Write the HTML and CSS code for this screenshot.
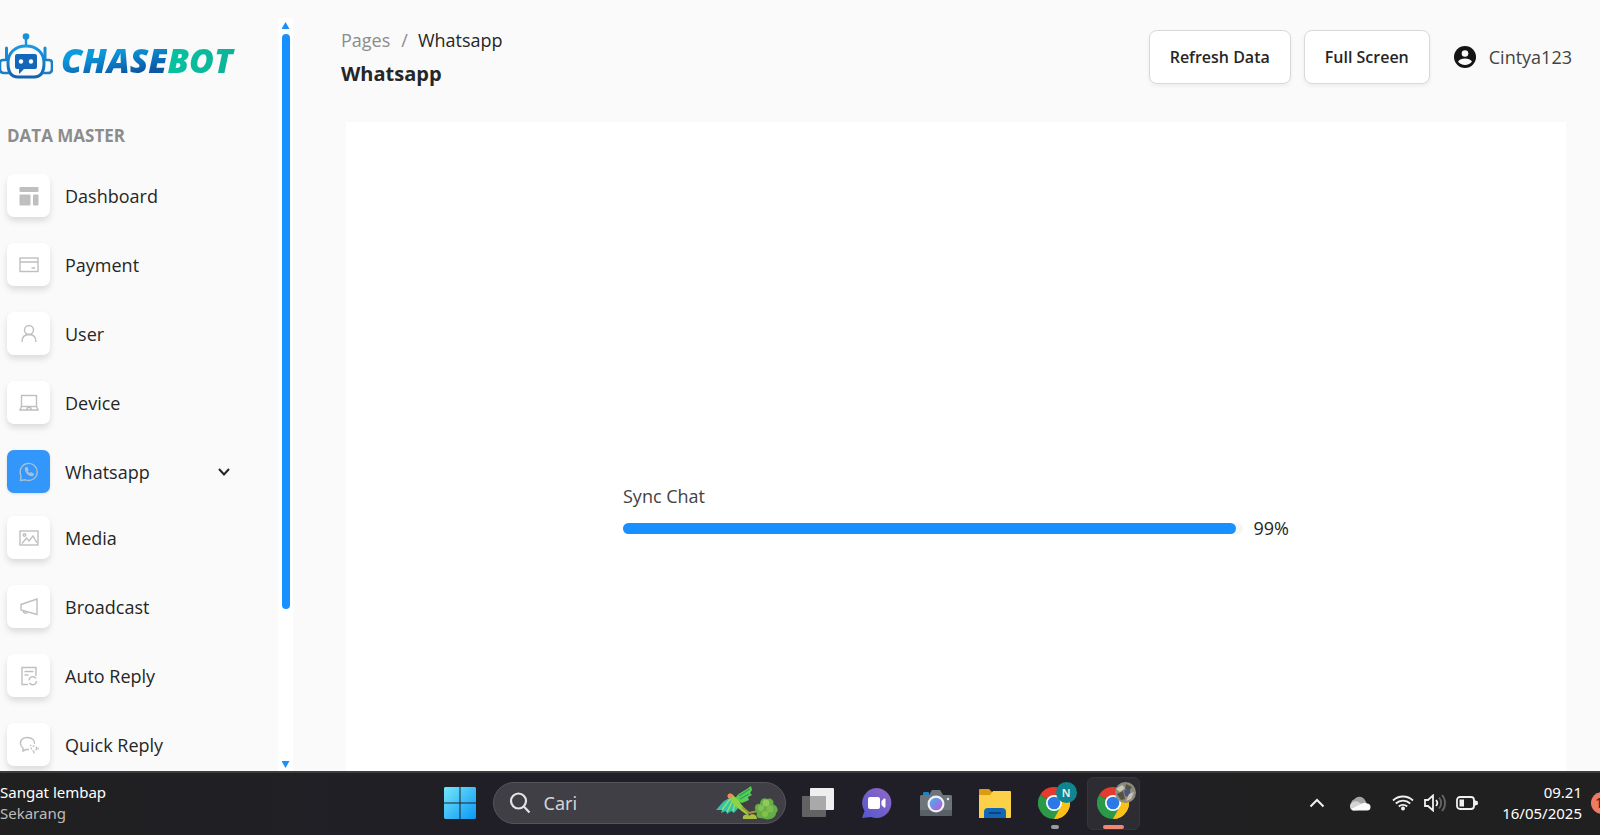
FILE: index.html
```html
<!DOCTYPE html>
<html lang="id">
<head>
    <meta charset="UTF-8">
    <meta name="viewport" content="width=device-width, initial-scale=1.0">
    <title>Whatsapp - Chasebot</title>
    <link rel="stylesheet" href="styles.css">
</head>
<body>

    <div class="app">
        <!-- Sidebar -->
        <aside class="sidebar">
            <div class="sidebar-content">
                <a href="#" class="logo">
                    <svg class="logo-bot" width="53" height="48" viewBox="0 0 53 48" fill="none">
                        <defs>
                            <linearGradient id="bot" x1="0" y1="0" x2="0" y2="1">
                                <stop offset="0" stop-color="#1b9ae0"/>
                                <stop offset="1" stop-color="#1263ae"/>
                            </linearGradient>
                        </defs>
                        <circle cx="26" cy="4.500" r="3.300" fill="#1b8fd8"/>
                        <path d="M26 6V13" stroke="#1b8fd8" stroke-width="2.4"/>
                        <path d="M6.500 16V27M45 16V27" stroke="#1b8ad4" stroke-width="3" stroke-linecap="round"/>
                        <path d="M26 14C15 14 8 21 8 31C8 41 12 45 18 45H34C40 45 44 41 44 31C44 21 37 14 26 14Z" stroke="url(#bot)" stroke-width="3"/>
                        <path d="M7 28H3Q0 28 0 31V37Q0 41 4 41H9M45 28H49Q52 28 52 31V37Q52 41 48 41H43" stroke="#1a7fca" stroke-width="2.600"/>
                        <path d="M17 22H35Q37 22 37 24V35Q37 37 35 37H24L19 42V37H17Q15 37 15 35V24Q15 22 17 22Z" fill="#1467b8"/>
                        <circle cx="21" cy="29.500" r="2.200" fill="#fff"/>
                        <circle cx="31" cy="29.500" r="2.200" fill="#fff"/>
                    </svg>
                    <span class="logo-text"><span class="logo-chase">CHASE</span><span class="logo-green">BOT</span></span>
                </a>

                <h6 class="menu-title">DATA MASTER</h6>

                <nav class="menu">
                    <a href="#" class="menu-item">
                        <span class="icon"><svg width="20" height="20" viewBox="0 0 20 20" fill="#bfbfbf"><rect x="0.500" y="1" width="19" height="5" rx="1"/><rect x="0.500" y="8.500" width="11" height="11" rx="1"/><rect x="14" y="8.500" width="5.500" height="11" rx="1"/></svg></span>
                        Dashboard
                    </a>
                    <a href="#" class="menu-item">
                        <span class="icon"><svg width="20" height="20" viewBox="0 0 20 20"><rect x="1" y="3" width="18" height="13.500"/><path d="M1 7H19M12.500 13H16"/></svg></span>
                        Payment
                    </a>
                    <a href="#" class="menu-item">
                        <span class="icon"><svg width="20" height="20" viewBox="0 0 20 20"><circle cx="10" cy="6" r="4.500"/><path d="M3 18C3 13 6 10.500 10 10.500S17 13 17 18"/></svg></span>
                        User
                    </a>
                    <a href="#" class="menu-item">
                        <span class="icon"><svg width="20" height="20" viewBox="0 0 20 20"><rect x="2.500" y="2.500" width="15" height="11"/><path d="M2.500 13.500L1 17H19L17.500 13.500M7.500 16.500L8.500 14.500H11.500L12.500 16.500"/></svg></span>
                        Device
                    </a>
                    <a href="#" class="menu-item active">
                        <span class="icon"><svg width="20" height="20" viewBox="0 0 20 20"><path d="M1.500 18.500L2 13.500A8.500 8.500 0 1 1 6.500 17.800Z"/><path d="M6.500 6.300C6 10 10 14 13.500 13.500L14.200 12L12 10.800L10.800 12C9.500 11.500 8.300 10.200 8 9L8.900 8L8 5.700Z" fill="#a9bfd6"/></svg></span>
                        Whatsapp
                        <svg class="chevron" width="12" height="8" viewBox="0 0 12 8"><path d="M1 1L6 6.500L11 1"/></svg>
                    </a>
                    <a href="#" class="menu-item">
                        <span class="icon"><svg width="20" height="20" viewBox="0 0 20 20"><rect x="1" y="3" width="18" height="14"/><path d="M3 15.500L7.500 10L10 13L14 8L18 15"/><circle cx="5.500" cy="7" r="1.300"/></svg></span>
                        Media
                    </a>
                    <a href="#" class="menu-item">
                        <span class="icon"><svg width="20" height="20" viewBox="0 0 20 20"><path d="M2 7.500L18 2V17.500L2 13ZM4 13.500C4 16.500 8 17 8.500 14.800"/></svg></span>
                        Broadcast
                    </a>
                    <a href="#" class="menu-item">
                        <span class="icon"><svg width="20" height="20" viewBox="0 0 20 20"><path d="M9 18.500H3V1.500H17V10M5.500 5.500H14.500M5.500 9H9.500"/><path d="M10 14.500A3.800 3.800 0 0 1 17 12.500M17.500 15A3.800 3.800 0 0 1 10.500 17"/></svg></span>
                        Auto Reply
                    </a>
                    <a href="#" class="menu-item">
                        <span class="icon"><svg width="20" height="20" viewBox="0 0 20 20"><path d="M15.500 9C16 5 12.500 2.500 8.500 2.500C4 2.500 1.500 5 1.500 8.500C1.500 10.500 2.500 12 4 13V16L7 14.500H10"/><circle cx="15" cy="13.500" r="2.600" stroke-dasharray="2 1.500"/><path d="M12 11L11 10M18.500 13.500H20M15 17V18.500"/></svg></span>
                        Quick Reply
                    </a>
                </nav>
            </div>

            <!-- Scrollbar -->
            <div class="scrollbar">
                <span class="arrow-up"></span>
                <div class="scroll-track"><div class="scroll-thumb"></div></div>
                <span class="arrow-down"></span>
            </div>
        </aside>

        <!-- Main Content -->
        <main class="main">
            <header class="topbar">
                <div class="heading">
                    <nav class="breadcrumb"><a href="#">Pages</a><span class="slash">/</span><span>Whatsapp</span></nav>
                    <h1>Whatsapp</h1>
                </div>
                <button class="btn">Refresh Data</button>
                <button class="btn">Full Screen</button>
                <a href="#" class="profile">
                    <svg width="22" height="22" viewBox="0 0 22 22"><circle cx="11" cy="11" r="11" fill="#141414"/><circle cx="11" cy="7.500" r="3.300" fill="#fafafa"/><path d="M4 15.500C6.500 11.500 15.500 11.500 18 15.500C15 20 7 20 4 15.500Z" fill="#fafafa"/></svg>
                    <span>Cintya123</span>
                </a>
            </header>

            <section class="card">
                <div class="sync">
                    <label for="sync-chat">Sync Chat</label>
                    <div class="sync-row">
                        <progress id="sync-chat" value="99" max="100"></progress>
                        <span>99%</span>
                    </div>
                </div>
            </section>
        </main>
    </div>

    <!-- Taskbar -->
    <footer class="taskbar">
        <div class="weather">
            <div>Sangat lembap</div>
            <div class="weather-time">Sekarang</div>
        </div>

        <div class="apps">
            <button class="slot" aria-label="Start">
                <svg width="32" height="32" viewBox="0 0 32 32">
                    <defs>
                        <linearGradient id="win" gradientUnits="userSpaceOnUse" x1="0" y1="0" x2="32" y2="32">
                            <stop offset="0" stop-color="#74e6fb"/>
                            <stop offset="1" stop-color="#0a97f5"/>
                        </linearGradient>
                    </defs>
                    <path d="M1 0H15.500V15.500H0V1ZM16.500 0H31L32 1V15.500H16.500ZM0 16.500H15.500V32H1L0 31ZM16.500 16.500H32V31L31 32H16.500Z" fill="url(#win)"/>
                </svg>
            </button>

            <label class="search">
                <svg width="22" height="22" viewBox="0 0 22 22" fill="none" stroke="#e4e4e4" stroke-width="2.200"><circle cx="9.500" cy="9" r="7.500"/><path d="M14.800 14.500L20.500 20.500"/></svg>
                <input type="text" placeholder="Cari">
                <svg width="62" height="34" viewBox="0 0 62 34">
                    <path d="M14 12C7 14 4 20 0 24L6 24L5 27L10 25L11 28L15 25L18 27L25 19L22 11Z" fill="#35c2aa"/>
                    <path d="M14 13L6 24M17 14L11 26M20 15L17 25" stroke="#8fe06a" stroke-width="1.500"/>
                    <path d="M19 14C20 7 28 6 35 0L36 4L34 7L36 9L32 11L33 14L26 17Z" fill="#58cf4d"/>
                    <path d="M23 10L34 3M24 13L33 8" stroke="#2a9e76" stroke-width="1.400"/>
                    <path d="M12 11C11 8 14 7 16 8L21 13L29 23L34 31L27 26L18 19Z" fill="#92d344"/>
                    <circle cx="14" cy="10" r="2.500" fill="#f1875b"/>
                    <path d="M26 21L33 27L42 25" stroke="#a6953a" stroke-width="2" fill="none"/>
                    <path d="M27 33C26 28 31 28 33 30C35 27 41 28 41 33Z" fill="#a9bf3c"/>
                    <path d="M39 23C38 19 42 17 44 18C44 13 48 11 51 13C55 11 59 15 57 18C62 20 63 25 60 27C60 33 51 35 46 32C43 33 39 31 41 27Z" fill="#65ad45"/>
                    <circle cx="50" cy="17" r="3.500" fill="#8cca5a"/><circle cx="45" cy="22" r="3" fill="#84c152"/><circle cx="54" cy="23" r="3.500" fill="#7dbc4e"/><circle cx="49" cy="28" r="3" fill="#86c04c"/>
                </svg>
            </label>

            <button class="slot" aria-label="Task view">
                <svg width="32" height="32" viewBox="0 0 32 32"><rect x="8" y="1" width="24" height="22" rx="1" fill="#efefef"/><rect x="0" y="9" width="24" height="21" rx="1" fill="#626262"/><path d="M8 9H24V23H8Z" fill="#a9a9a9"/></svg>
            </button>
            <button class="slot" aria-label="Chat">
                <svg width="32" height="32" viewBox="0 0 32 32">
                    <defs><linearGradient id="chat" x1="1" y1="0" x2="0" y2="1"><stop offset="0" stop-color="#9367c4"/><stop offset="1" stop-color="#5359d0"/></linearGradient></defs>
                    <path d="M16 1A15 15 0 1 1 10 30L1 31L3.500 24A15 15 0 0 1 16 1Z" fill="url(#chat)"/>
                    <rect x="7" y="10" width="12" height="12" rx="2" fill="#fff"/><path d="M20.500 14L23 11.500Q24.500 11 24.500 12.500V19.500Q24.500 21 23 20.500L20.500 18Z" fill="#fff"/>
                </svg>
            </button>
            <button class="slot" aria-label="Camera">
                <svg width="34" height="32" viewBox="0 0 34 32">
                    <defs><linearGradient id="lens" x1="0" y1="0" x2="1" y2="1"><stop offset="0" stop-color="#3fb5f2"/><stop offset="1" stop-color="#c154d5"/></linearGradient></defs>
                    <rect x="4" y="5" width="6" height="6" rx="1" fill="#1883c5"/>
                    <path d="M2 8H10L13 3H21L24 8H32L33 9V28L32 29H2L1 28V9Z" fill="#6c757b"/><path d="M1 23H33V28L32 29H2L1 28Z" fill="#596066"/>
                    <circle cx="17" cy="17" r="8.500" fill="#f1f1f4"/><circle cx="17" cy="17" r="6.300" fill="url(#lens)"/><circle cx="29" cy="12" r="1.200" fill="#e8e8e8"/>
                </svg>
            </button>
            <button class="slot" aria-label="File Explorer">
                <svg width="34" height="32" viewBox="0 0 34 32"><path d="M1 3Q1 2 2 2H11L14 5V11H1Z" fill="#dc9b13"/><path d="M1 8H12L15 4H32Q33 4 33 5V30Q33 31 32 31H1Z" fill="#fcd148"/><path d="M6 31V25Q6 21 10 21H24Q28 21 28 25V31Z" fill="#1268b6"/><path d="M11 26H23" stroke="#0a4282" stroke-width="2"/></svg>
            </button>
            <button class="slot" aria-label="Chrome">
                <svg width="32" height="32" viewBox="0 0 32 32">
                    <g id="chrome">
                        <path d="M16 16L2.140 8A16 16 0 0 1 29.860 8Z" fill="#e33b2e"/>
                        <path d="M16 16L29.860 8A16 16 0 0 1 16 32Z" fill="#fbc116"/>
                        <path d="M16 16L16 32A16 16 0 0 1 2.140 8Z" fill="#2a9a48"/>
                        <path d="M16 8.500H30A16 16 0 0 1 16 32L22.500 20Z" fill="#fbc116"/>
                        <path d="M22.500 20L16 32L9 24Z" fill="#2a9a48"/>
                        <circle cx="16" cy="16" r="8" fill="#fff"/>
                        <circle cx="16" cy="16" r="6.300" fill="#2c78e6"/>
                    </g>
                </svg>
                <span class="badge badge-n">N</span>
                <span class="indicator"></span>
            </button>
            <button class="slot slot-active" aria-label="Chrome">
                <svg width="32" height="32" viewBox="0 0 32 32"><use href="#chrome"/></svg>
                <span class="badge"><svg width="21" height="21" viewBox="0 0 21 21"><circle cx="10.500" cy="10.500" r="10.500" fill="#8d8b7c"/><path d="M1 7L7 3L10 6L5 10Z" fill="#c7c7b5"/><path d="M11 2L17 5L14 9L10 7Z" fill="#4f5747"/><path d="M2 12L8 9L10 17L6 18Z" fill="#55533f"/><path d="M9 8H15V15L10 14Z" fill="#4b557e"/><path d="M14 12L19 10L16 17L11 19Z" fill="#c9c2b5"/></svg></span>
                <span class="indicator indicator-active"></span>
            </button>
        </div>

        <div class="tray">
            <svg width="16" height="10" viewBox="0 0 16 10" fill="none" stroke="#f0f0f0" stroke-width="2"><path d="M1.500 8.500L8 2L14.500 8.500"/></svg>
            <svg class="cloud" width="22" height="15" viewBox="0 0 22 15"><path d="M3 9A3.500 3.500 0 0 1 5 3.500A6.500 6.500 0 0 1 16 4L18 8Z" fill="#a5a5a5"/><path d="M4 14.500A4.500 4.500 0 0 1 4 6Q8 4 11 7L15 9L10 14Z" fill="#d4d4d4"/><path d="M2 13L13 7.500A5 5 0 0 1 18 7.500A3.500 3.500 0 0 1 18 14.500H4Z" fill="#fafafa"/></svg>
            <div class="tray-status">
                <svg width="22" height="16" viewBox="0 0 22 16" fill="none" stroke="#f0f0f0" stroke-width="1.800"><path d="M1 5.500A14.500 14.500 0 0 1 21 5.500M3.800 8.500A10.500 10.500 0 0 1 18.200 8.500M6.800 11.500A6 6 0 0 1 15.200 11.500"/><circle cx="11" cy="13.500" r="2" fill="#f0f0f0" stroke="none"/></svg>
                <svg width="22" height="18" viewBox="0 0 22 18" fill="none" stroke="#f0f0f0" stroke-width="1.800"><path d="M1 6H4L9 1.500V16.500L4 12H1ZM12 6A4.500 4.500 0 0 1 12 12"/><path d="M15 3.500A8 8 0 0 1 15 14.500M18 1A12 12 0 0 1 18 17" stroke="#666"/></svg>
                <svg width="22" height="14" viewBox="0 0 22 14" fill="none" stroke="#f0f0f0" stroke-width="1.800"><rect x="1" y="1" width="17" height="12" rx="3"/><rect x="3.500" y="3.500" width="4.500" height="7" fill="#f0f0f0" stroke="none"/><path d="M18.500 5L21 6V8L18.500 9Z" fill="#f0f0f0"/></svg>
            </div>
            <div class="clock">
                <div>09.21</div>
                <div>16/05/2025</div>
            </div>
            <span class="notif">1</span>
        </div>
    </footer>

</body>
</html>
```

FILE: styles.css
```css
/* General Styles */
* {
    box-sizing: border-box;
}

body {
    margin: 0;
    height: 100vh;
    display: flex;
    flex-direction: column;
    overflow: hidden;
    background-color: #fafafa;
    color: #262626;
    font-family: "Open Sans", "Noto Sans", sans-serif;
    font-size: 18px;
    line-height: 24px;
}

a {
    color: inherit;
    text-decoration: none;
}

svg {
    display: block;
    flex: none;
}

button {
    font-family: inherit;
    cursor: pointer;
}

.app {
    flex: 1;
    min-height: 0;
    display: flex;
}

/* Sidebar */
.sidebar {
    width: 293px;
    flex: none;
    display: flex;
}

.sidebar-content {
    flex: 1;
    overflow: hidden;
    padding-top: 32px;
}

.logo {
    display: flex;
    align-items: flex-start;
    gap: 8px;
    height: 52px;
}

.logo-text {
    font-size: 34px;
    font-weight: 800;
    font-style: italic;
    line-height: 48px;
    padding-top: 4px;
}

.logo-chase,
.logo-green {
    background: linear-gradient(170deg, #0c9ade 35%, #0d57a4 75%);
    -webkit-background-clip: text;
    background-clip: text;
    color: transparent;
}

.logo-green {
    padding-right: 6px;
    background-image: linear-gradient(100deg, #05c3a0, #0fb097);
}

.menu-title {
    margin: 40px 0 26px 7px;
    color: #8c8c8c;
    font-size: 17px;
    font-weight: 700;
}

.menu {
    display: flex;
    flex-direction: column;
    gap: 26px;
    padding-left: 7px;
}

.menu-item {
    display: flex;
    align-items: center;
    gap: 15px;
}

.menu-item .icon {
    width: 43px;
    height: 43px;
    display: flex;
    align-items: center;
    justify-content: center;
    background-color: #fff;
    border-radius: 7px;
    box-shadow: 0 4px 6px rgba(0, 0, 0, 0.12);
}

.icon svg:not([fill]) {
    fill: none;
    stroke: #bfbfbf;
    stroke-width: 1.4;
}

.menu-item.active {
    margin-bottom: -3px;
}

.menu-item.active .icon {
    background-color: #3296fa;
    box-shadow: 0 1px 3px rgba(0, 0, 0, 0.12);
}

.menu-item.active .icon svg {
    stroke: #a9bfd6;
}

.chevron {
    margin: 0 48px 0 auto;
    fill: none;
    stroke: #262626;
    stroke-width: 2;
}

/* Scrollbar */
.scrollbar {
    width: 15px;
    margin-top: 18px;
    padding: 4px 0 3px;
    display: flex;
    flex-direction: column;
    align-items: center;
    gap: 5px;
    background-color: #fff;
}

.arrow-up,
.arrow-down {
    width: 8px;
    height: 7px;
    background-color: #1890ff;
    clip-path: polygon(50% 0, 100% 100%, 0 100%);
}

.arrow-down {
    clip-path: polygon(0 0, 100% 0, 50% 100%);
}

.scroll-track {
    flex: 1;
    width: 8px;
}

.scroll-thumb {
    height: 79.6%;
    border-radius: 4px;
    background-color: #1890ff;
}

/* Main Content */
.main {
    flex: 1;
    min-width: 0;
    display: flex;
    flex-direction: column;
}

.topbar {
    height: 122px;
    flex: none;
    display: flex;
    align-items: flex-start;
    padding: 30px 28px 0 48px;
}

.heading {
    flex: 1;
    margin-top: -2px;
}

.breadcrumb a,
.slash {
    color: #8c8c8c;
}

.slash {
    margin: 0 10px 0 11px;
}

.topbar h1 {
    margin: 8px 0 0;
    font-size: 20px;
    font-weight: 700;
    line-height: 28px;
    color: #262626;
}

.btn {
    height: 54px;
    margin-right: 13px;
    padding: 0 20px;
    background-color: #fff;
    border: 1px solid #d9d9d9;
    border-radius: 8px;
    box-shadow: 0 2px 4px rgba(0, 0, 0, 0.06);
    color: #262626;
    font-size: 16px;
    font-weight: 600;
}

.profile {
    display: flex;
    align-items: center;
    gap: 13px;
    height: 54px;
    margin-left: 11px;
    color: #434343;
}

/* Sync card */
.card {
    flex: 1;
    margin: 0 34px 0 53px;
    padding-bottom: 231px;
    display: flex;
    flex-direction: column;
    align-items: center;
    justify-content: flex-end;
    background-color: #fff;
}

.sync {
    width: 666px;
    max-width: 90%;
    color: #434343;
}

.sync label {
    display: block;
    margin-bottom: 8px;
}

.sync-row {
    display: flex;
    align-items: center;
    gap: 11px;
    color: #262626;
}

progress {
    flex: 1;
    height: 11px;
    appearance: none;
    -webkit-appearance: none;
    border: none;
}

progress::-webkit-progress-bar {
    background-color: #f5f5f5;
    border-radius: 6px;
}

progress::-webkit-progress-value {
    background-color: #1890ff;
    border-radius: 6px;
}

/* Taskbar */
.taskbar {
    height: 64px;
    flex: none;
    display: grid;
    grid-template-columns: 1fr auto 1fr;
    align-items: center;
    padding-bottom: 2px;
    overflow: hidden;
    background: linear-gradient(90deg, #202021, #201f28 35%, #201f28 65%, #202020 80%);
    border-top: 2px solid #3d3d3e;
    color: #fff;
    font-family: "Noto Sans", sans-serif;
    font-size: 15px;
    line-height: 21px;
}

.weather-time {
    color: #bdbdbd;
}

.apps {
    display: flex;
    align-items: center;
    gap: 6px;
    margin-right: 27px;
}

.slot {
    position: relative;
    width: 53px;
    height: 53px;
    display: flex;
    align-items: center;
    justify-content: center;
    padding: 0;
    background: none;
    border: 1px solid transparent;
    border-radius: 6px;
}

.slot-active {
    background-color: #2d2c33;
    border-color: #36353c;
}

.badge {
    position: absolute;
    top: 4px;
    right: 3px;
    width: 21px;
    height: 21px;
    border-radius: 50%;
    color: #e8f4f4;
    font-size: 11px;
    font-weight: 600;
    line-height: 21px;
    text-align: center;
}

.badge-n {
    background-color: #108590;
}

.indicator {
    position: absolute;
    bottom: 0;
    left: 22px;
    width: 8px;
    height: 4px;
    border-radius: 2px;
    background-color: #9b9b9f;
}

.indicator-active {
    left: 15px;
    width: 21px;
    background-color: #ef8872;
}

.search {
    width: 293px;
    height: 42px;
    display: flex;
    align-items: center;
    gap: 13px;
    padding: 0 7px 0 15px;
    background-color: #403f45;
    border: 1px solid #55545a;
    border-radius: 21px;
}

.search input {
    flex: 1;
    min-width: 0;
    padding: 0;
    background: none;
    border: none;
    outline: none;
    color: #fff;
    font-family: inherit;
    font-size: 18px;
}

.search input::placeholder {
    color: #d4d4d6;
}

.tray {
    display: flex;
    align-items: center;
    justify-content: flex-end;
}

.cloud {
    margin: 0 21px 0 24px;
}

.tray-status {
    display: flex;
    align-items: center;
    gap: 10px;
    margin-right: 24px;
}

.clock {
    text-align: right;
}

.notif {
    width: 22px;
    height: 22px;
    flex: none;
    margin: 0 -13px 0 9px;
    padding-left: 4px;
    border-radius: 50%;
    background-color: #ee7a64;
    color: #33211e;
    font-size: 14px;
}
```
